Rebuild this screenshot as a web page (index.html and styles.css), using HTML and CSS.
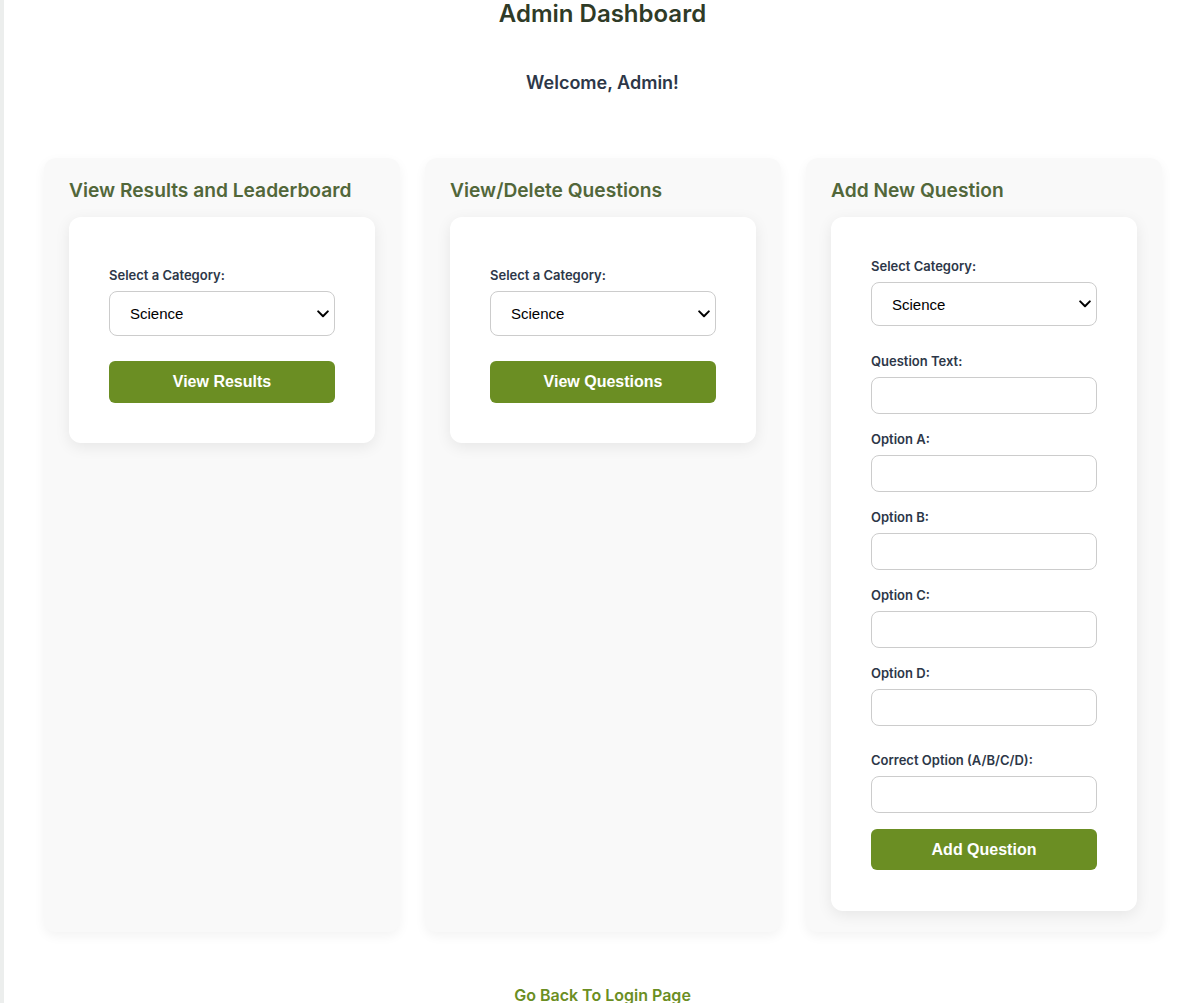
FILE: index.html
```html
<!DOCTYPE html>
<html lang="en">
<head>
<meta charset="utf-8">
<title>Admin Dashboard</title>
<link rel="stylesheet" href="styles.css">
</head>
<body>
<div class="page">
  <h1 class="title">Admin Dashboard</h1>
  <p class="welcome">Welcome, Admin!</p>

  <div class="columns">
    <section class="column">
      <h2 class="column-title">View Results and Leaderboard</h2>
      <form class="card card-compact">
        <label class="field-label">Select a Category:</label>
        <div class="select-wrap">
          <select class="field-select">
            <option>Science</option>
            <option>History</option>
            <option>Math</option>
          </select>
          <svg class="select-arrow" width="12" height="8" viewBox="0 0 12 8" aria-hidden="true"><path d="M1.2 1.4 L6 6.2 L10.8 1.4" fill="none" stroke="#000" stroke-width="2" stroke-linecap="round" stroke-linejoin="round"/></svg>
        </div>
        <button type="button" class="btn btn-compact">View Results</button>
      </form>
    </section>

    <section class="column">
      <h2 class="column-title">View/Delete Questions</h2>
      <form class="card card-compact">
        <label class="field-label">Select a Category:</label>
        <div class="select-wrap">
          <select class="field-select">
            <option>Science</option>
            <option>History</option>
            <option>Math</option>
          </select>
          <svg class="select-arrow" width="12" height="8" viewBox="0 0 12 8" aria-hidden="true"><path d="M1.2 1.4 L6 6.2 L10.8 1.4" fill="none" stroke="#000" stroke-width="2" stroke-linecap="round" stroke-linejoin="round"/></svg>
        </div>
        <button type="button" class="btn btn-compact">View Questions</button>
      </form>
    </section>

    <section class="column">
      <h2 class="column-title">Add New Question</h2>
      <form class="card">
        <label class="field-label">Select Category:</label>
        <div class="select-wrap select-wrap-gap">
          <select class="field-select field-select-short">
            <option>Science</option>
            <option>History</option>
            <option>Math</option>
          </select>
          <svg class="select-arrow" width="12" height="8" viewBox="0 0 12 8" aria-hidden="true"><path d="M1.2 1.4 L6 6.2 L10.8 1.4" fill="none" stroke="#000" stroke-width="2" stroke-linecap="round" stroke-linejoin="round"/></svg>
        </div>
        <label class="field-label">Question Text:</label>
        <input class="field-input" type="text">
        <label class="field-label">Option A:</label>
        <input class="field-input" type="text">
        <label class="field-label">Option B:</label>
        <input class="field-input" type="text">
        <label class="field-label">Option C:</label>
        <input class="field-input" type="text">
        <label class="field-label">Option D:</label>
        <input class="field-input field-input-gap" type="text">
        <label class="field-label">Correct Option (A/B/C/D):</label>
        <input class="field-input field-input-last" type="text">
        <button type="button" class="btn">Add Question</button>
      </form>
    </section>
  </div>

  <a class="back-link" href="#">Go Back To Login Page</a>
</div>
</body>
</html>
```

FILE: styles.css
```css
html, body {
  margin: 0;
  padding: 0;
}

body {
  background: #eceeed;
  font-family: Inter, "Noto Sans", sans-serif;
}

.page {
  margin-left: 4px;
  padding-top: 2px;
  background: #ffffff;
  min-height: 1001px;
  display: flex;
  flex-direction: column;
  align-items: center;
}

.title {
  margin: 0;
  font-size: 24px;
  line-height: 24px;
  font-weight: 600;
  color: #2f3b27;
  text-align: center;
}

.welcome {
  margin: 46px 0 0;
  font-size: 18px;
  line-height: 22px;
  font-weight: 600;
  color: #2d3748;
  text-align: center;
}

.columns {
  margin-top: 64px;
  align-self: stretch;
  padding: 0 39px 0 40px;
  display: grid;
  grid-template-columns: repeat(3, 1fr);
  gap: 25px;
}

.column {
  background: #f9f9f9;
  border-radius: 12px;
  box-shadow: 0 4px 12px rgba(0, 0, 0, 0.05);
  padding: 20px 25px 21px;
  display: flex;
  flex-direction: column;
  align-items: stretch;
}

.column-title {
  margin: 0 0 15px;
  font-size: 19.2px;
  line-height: 24px;
  font-weight: 600;
  color: #52673a;
}

.card {
  background: #ffffff;
  border-radius: 12px;
  box-shadow: 0 4px 15px rgba(0, 0, 0, 0.08);
  padding: 40px 40px 41px;
  display: flex;
  flex-direction: column;
  margin: 0;
}

.card-compact {
  padding: 49px 40px 40px;
}

.field-label {
  display: block;
  font-size: 13px;
  line-height: 18px;
  font-weight: 600;
  color: #2d3748;
  margin-bottom: 7px;
}

.select-wrap {
  position: relative;
  display: flex;
  margin-bottom: 25px;
}

.select-wrap-gap {
  margin-bottom: 26px;
}

.field-select {
  flex: 1;
  -webkit-appearance: none;
  appearance: none;
  height: 45px;
  border: 1px solid #cccccc;
  border-radius: 8px;
  background: #ffffff;
  padding: 0 30px 0 20px;
  font-family: "Liberation Sans", Arial, sans-serif;
  font-size: 15px;
  color: #000000;
  margin: 0;
}

.field-select-short {
  height: 44px;
}

.select-arrow {
  position: absolute;
  right: 6px;
  top: 50%;
  margin-top: -4px;
  pointer-events: none;
}

.field-input {
  height: 37px;
  box-sizing: border-box;
  border: 1px solid #cccccc;
  border-radius: 8px;
  background: #ffffff;
  padding: 0 12px;
  font-family: "Liberation Sans", Arial, sans-serif;
  font-size: 15px;
  margin: 0 0 16px;
}

.field-input-gap {
  margin-bottom: 25px;
}

.field-input-last {
  margin-bottom: 16px;
}

.btn {
  height: 41px;
  border: none;
  border-radius: 6px;
  background: #6b8e23;
  color: #ffffff;
  font-family: "Liberation Sans", Arial, sans-serif;
  font-size: 16px;
  font-weight: 700;
  cursor: pointer;
}

.btn-compact {
  height: 42px;
}

.back-link {
  margin-top: 54px;
  font-size: 16px;
  line-height: 19px;
  font-weight: 600;
  color: #6b8e23;
  text-decoration: none;
}
```
